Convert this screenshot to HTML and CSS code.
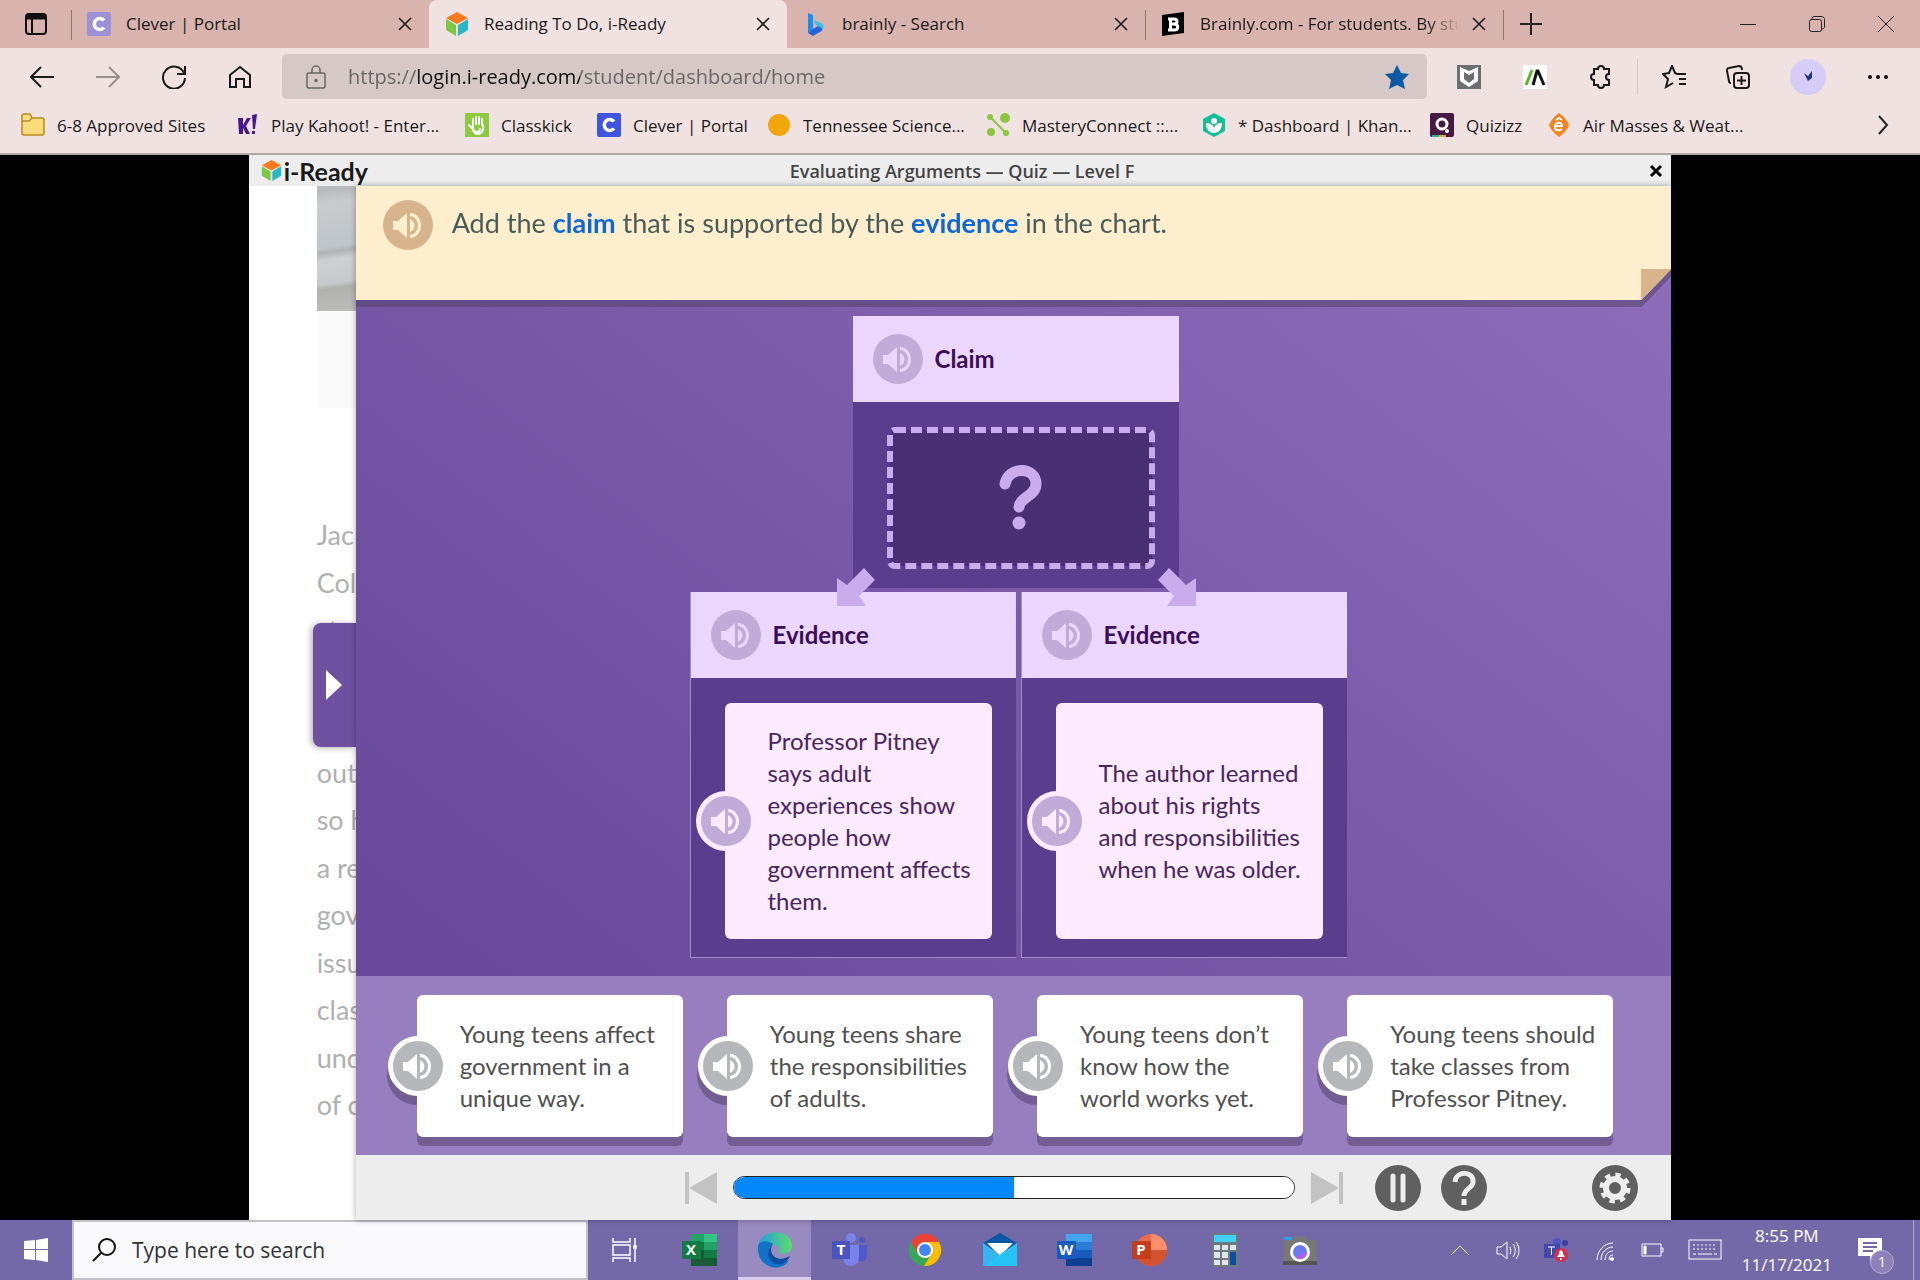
FILE: index.html
```html
<!DOCTYPE html>
<html lang="en">
<head>
    <meta charset="UTF-8">
    <meta name="viewport" content="width=device-width, initial-scale=1.0">
    <title>Reading To Do, i-Ready</title>
    <link rel="stylesheet" href="styles.css">
</head>
<body>
    <!-- Shared icons -->
    <svg class="sprite" aria-hidden="true">
        <symbol id="speaker" viewBox="0 0 50 50">
            <path fill="currentColor" d="M10 21h5l9-8v25l-9-8h-5zM27 19c6 3 6 10 0 13z"/>
            <path fill="none" stroke="currentColor" stroke-width="3" d="M27 14.500a9.500 11 0 0 1 0 22"/>
        </symbol>
        <symbol id="close" viewBox="0 0 16 16">
            <path fill="none" stroke="currentColor" stroke-width="1.600" d="M2 2l12 12M14 2L2 14"/>
        </symbol>
        <symbol id="cube" viewBox="0 0 24 24">
            <path fill="#f47b20" d="M12 0l11 6-11 6L1 6z"/>
            <path fill="#7ac943" d="M1 7l10 6v11L1 18z"/>
            <path fill="#27b5c8" d="M23 7l-10 6v11l10-6z"/>
        </symbol>
        <symbol id="clever" viewBox="0 0 24 24">
            <rect width="24" height="24" rx="2" fill="currentColor"/>
            <path fill="none" stroke="#fff" stroke-width="3.500" d="M17 8.500a5.500 5.500 0 1 0 0 7"/>
        </symbol>
    </svg>

    <div class="tabs">
        <button class="tab-actions" aria-label="Tab actions menu">
            <svg width="24" height="24" viewBox="0 0 24 24" fill="none" stroke="#111" stroke-width="2"><rect x="2" y="2" width="20" height="20" rx="3"/><path d="M2 5h20" stroke-width="5"/><path d="M8 7v15"/></svg>
        </button>
        <div class="tab">
            <svg class="icon tab-clever"><use href="#clever"/></svg>
            <span>Clever | Portal</span>
            <button aria-label="Close tab"><svg><use href="#close"/></svg></button>
        </div>
        <div class="tab active">
            <svg class="icon"><use href="#cube"/></svg>
            <span>Reading To Do, i-Ready</span>
            <button aria-label="Close tab"><svg><use href="#close"/></svg></button>
        </div>
        <div class="tab no-line">
            <svg class="icon" viewBox="0 0 24 24"><path fill="#1b8df0" d="M5 1l5 2v14l-5 4z"/><path fill="#2563dd" d="M5 21l5-4 5-3 5 1c0 3-2 5-5 6l-5 3z"/><path fill="#35c3f3" d="M11 8l7 3c2 1 3 3 2 6l-7-4z"/></svg>
            <span>brainly - Search</span>
            <button aria-label="Close tab"><svg><use href="#close"/></svg></button>
        </div>
        <div class="tab">
            <svg class="icon" viewBox="0 0 24 24"><path d="M1 3l22-3v21L1 24z"/><path fill="none" stroke="#fff" stroke-width="3" d="M7 7h6c4 0 4 5 0 5h-3 3c5 0 5 6 0 6H7M9.500 7v11"/></svg>
            <span class="fade">Brainly.com - For students. By stu</span>
            <button aria-label="Close tab"><svg><use href="#close"/></svg></button>
        </div>
        <div class="new-tab">
            <button aria-label="New tab"><svg width="22" height="22" viewBox="0 0 22 22" stroke="#222" stroke-width="2"><path d="M11 0v22M0 11h22"/></svg></button>
        </div>
        <div class="window-buttons">
            <button aria-label="Minimize"><svg width="16" height="16" viewBox="0 0 16 16" stroke="#222"><path d="M0 8.500h16"/></svg></button>
            <button aria-label="Restore"><svg width="16" height="16" viewBox="0 0 16 16" fill="none" stroke="#222"><rect x=".5" y="3.500" width="12" height="12" rx="2"/><path d="M3 3c0-2 1-2.500 2-2.500h7c2 0 3.500 1 3.500 3V11c0 1-1 2-3 2"/></svg></button>
            <button aria-label="Close window"><svg width="16" height="16" viewBox="0 0 16 16" stroke="#222"><path d="M0 0l16 16M16 0L0 16"/></svg></button>
        </div>
    </div>

    <div class="toolbar">
        <div class="nav-buttons">
            <button aria-label="Back"><svg viewBox="0 0 24 24"><path d="M11 2L1 12l10 10M1 12h23"/></svg></button>
            <button class="dim" aria-label="Forward"><svg viewBox="0 0 24 24"><path d="M13 2l10 10-10 10M23 12H0"/></svg></button>
            <button aria-label="Refresh"><svg viewBox="0 0 24 24"><path d="M22 8a11 11 0 1 0 1 5M23 1v8h-8"/></svg></button>
            <button aria-label="Home"><svg viewBox="0 0 24 24"><path d="M2 10l10-8 10 8v12h-6v-8H8v8H2z"/></svg></button>
        </div>
        <div class="address">
            <svg class="lock" width="20" height="24" viewBox="0 0 20 24" fill="none" stroke="#666" stroke-width="1.600"><rect x="1" y="8" width="18" height="15" rx="2"/><path d="M6 8V5a4 4 0 0 1 8 0v3"/><circle cx="10" cy="15.500" r="1" fill="#666"/></svg>
            <input type="text" aria-label="Address" value="https://login.i-ready.com/student/dashboard/home">
            <button aria-label="Favorite"><svg viewBox="0 0 24 24"><path fill="#0c59a4" d="M12 0l4 8 8 1-6 6 2 9-8-4-8 4 2-9-6-6 8-1z"/></svg></button>
        </div>
        <div class="extensions">
            <button aria-label="McAfee"><svg viewBox="0 0 24 24"><rect width="24" height="24" fill="#6b6f70"/><path fill="#fff" d="M3 2l9 4 9-4v14l-9 6-9-6z"/><path fill="#6b6f70" d="M7 7l5 3 5-3v7l-5 4-5-4z"/></svg></button>
            <button aria-label="Accelerate"><svg viewBox="0 0 24 24"><rect width="24" height="24" fill="#fff"/><path stroke="#5cb531" stroke-width="3" d="M3 20L9 5"/><path fill="none" stroke="#111" stroke-width="3.500" d="M10 20l4-14h1l6 14"/></svg></button>
            <button aria-label="Extensions"><svg viewBox="0 0 24 24"><path d="M5 4h4c0-4 6-4 6 0h5v5c-4 0-4 6 0 6v5h-5c0 4-6 4-6 0H5v-5c-4 0-4-6 0-6z"/></svg></button>
        </div>
        <div class="browser-tools">
            <button aria-label="Favorites"><svg viewBox="0 0 24 24"><path d="M15 9h9M17 14h7M17 19h7M15 9l-2-1-3-7-3 7-6 1 5 5-2 8 7-4"/></svg></button>
            <button aria-label="Collections"><svg viewBox="0 0 24 24"><rect x="8" y="8" width="15" height="15" rx="3"/><path d="M15.500 11v9M11 15.500h9M5 18c-1 0-2-1-2-2L1 6c0-2 0-3 2-3l10-2c2 0 3 1 3 4"/></svg></button>
            <button class="avatar" aria-label="Profile"><svg viewBox="0 0 24 24"><path fill="#27357a" stroke="none" d="M12 16L8 8l4 3 4-5v7z"/></svg></button>
            <button aria-label="Settings and more"><svg viewBox="0 0 24 24"><g fill="#111" stroke="none"><circle cx="4" cy="12" r="2"/><circle cx="12" cy="12" r="2"/><circle cx="20" cy="12" r="2"/></g></svg></button>
        </div>
    </div>

    <nav class="bookmarks">
        <a href="#"><svg class="icon" viewBox="0 0 24 24"><path fill="#fbdc7c" stroke="#b98a1d" stroke-width="1.500" d="M1 3c0-1 1-2 2-2h6l2 4h10c1 0 2 1 2 2v13c0 1-1 2-2 2H3c-1 0-2-1-2-2zM1 8h7l3-3"/></svg>6-8 Approved Sites</a>
        <a href="#"><svg class="icon" viewBox="0 0 24 24"><path fill="#46178f" d="M3 5h5v7l4-7h4l-5 8 4 8h-4l-3-6v6H4zM17 2l5-1-2 15h-2zM17 18h3v3h-3z"/></svg>Play Kahoot! - Enter...</a>
        <a href="#"><svg class="icon" viewBox="0 0 24 24"><rect width="24" height="24" fill="#8ccb3f"/><path fill="none" stroke="#fff" stroke-width="2" stroke-linecap="round" d="M8 12V6M11 11V4M14 11V4M17 12V6M4 12l4 4M8 12c-1 4 0 8 4 9 5 0 7-4 6-9M9 17c2 3 5 3 6-1"/></svg>Classkick</a>
        <a href="#"><svg class="icon blue"><use href="#clever"/></svg>Clever | Portal</a>
        <a href="#"><svg class="icon" viewBox="0 0 24 24"><circle cx="12" cy="12" r="11" fill="#f3a60c"/></svg>Tennessee Science...</a>
        <a href="#"><svg class="icon" viewBox="0 0 24 24"><g fill="#8cc63f"><circle cx="4" cy="4" r="3"/><circle cx="19" cy="5" r="5"/><circle cx="5" cy="19" r="4"/><circle cx="20" cy="20" r="3"/></g><path stroke="#8cc63f" stroke-width="2" d="M4 4l16 16"/></svg>MasteryConnect ::...</a>
        <a href="#"><svg class="icon" viewBox="0 0 24 24"><path fill="#14bf96" d="M12 0l11 6v12l-11 6-11-6V6z"/><circle cx="12" cy="8" r="3" fill="#fff"/><path fill="#fff" d="M4 10c4 0 7 2 8 5 1-3 4-5 8-5 0 6-3 10-8 10s-8-4-8-10z"/></svg>* Dashboard | Khan...</a>
        <a href="#"><svg class="icon" viewBox="0 0 24 24"><rect width="24" height="24" rx="2" fill="#461a42"/><path fill="#22b4ad" d="M2 22h7v2H2z"/><path fill="#e7a83b" d="M9 22h7v2H9z"/><circle cx="12" cy="11" r="5" fill="none" stroke="#fff" stroke-width="3"/><circle cx="17" cy="18" r="2" fill="#fff"/></svg>Quizizz</a>
        <a href="#"><svg class="icon" viewBox="0 0 24 24"><path fill="#f58220" d="M12 0c3 2 9 8 10 12-1 4-7 10-10 12-3-2-9-8-10-12C3 8 9 2 12 0z"/><path fill="none" stroke="#fff" stroke-width="2" d="M9 13h6c0-5-7-4-7 1 0 4 5 4 7 2M9 7l3-2 3 2"/></svg>Air Masses &amp; Weat...</a>
        <button aria-label="More favorites"><svg width="12" height="20" viewBox="0 0 12 20" fill="none" stroke="#222" stroke-width="2"><path d="M2 1l8 9-8 9"/></svg></button>
    </nav>

    <div class="screen">
        <div class="app">
            <header class="app-header">
                <div class="logo"><svg><use href="#cube"/></svg>i-Ready</div>
                <h1>Evaluating Arguments — Quiz — Level F</h1>
                <button aria-label="Close lesson"><svg width="14" height="14" stroke="#000" stroke-width="3"><path d="M2 2l10 10M12 2L2 12"/></svg></button>
            </header>
            <div class="app-body">
                <aside class="passage">
                    <div class="passage-image"></div>
                    <div class="passage-caption"></div>
                    <div class="passage-text">
                        <p>Jac</p>
                        <p>Col</p>
                        <p>st</p>
                        <p>&nbsp;</p>
                        <p>&nbsp;</p>
                        <p>out</p>
                        <p>so h</p>
                        <p>a re</p>
                        <p>gov</p>
                        <p>issu</p>
                        <p>clas</p>
                        <p>und</p>
                        <p>of c</p>
                    </div>
                    <button class="passage-toggle" aria-label="Show passage"><svg width="16" height="30"><path fill="#fff" d="M0 0l16 15L0 30z"/></svg></button>
                </aside>

                <main class="question">
                    <div class="prompt">
                        <div class="prompt-paper">
                            <button class="audio tan" aria-label="Play audio"><svg><use href="#speaker"/></svg></button>
                            <p>Add the <b>claim</b> that is supported by the <b>evidence</b> in the chart.</p>
                        </div>
                    </div>

                    <div class="chart">
                        <section class="box claim">
                            <div class="box-title">
                                <button class="audio" aria-label="Play audio"><svg><use href="#speaker"/></svg></button>
                                <h2>Claim</h2>
                            </div>
                            <div class="drop">
                                <svg width="268" height="142">
                                    <rect x="3" y="3" width="262" height="136" rx="5" fill="#493073" stroke="#c9aceb" stroke-width="6" stroke-dasharray="11 5"/>
                                    <path fill="none" stroke="#c9aceb" stroke-width="11" stroke-linecap="round" d="M118 57c3-18 31-18 31 0 0 12-16 13-17 23"/>
                                    <circle cx="132" cy="96" r="6.500" fill="#c9aceb"/>
                                </svg>
                            </div>
                            <svg class="arrow left" width="38" height="38"><path d="M27 0l11 12-16 16 7 10H0V10l10 7z"/></svg>
                            <svg class="arrow right" width="38" height="38"><path d="M11 0L0 12l16 16-7 10h29V10l-10 7z"/></svg>
                        </section>
                        <div class="evidence-row">
                            <section class="box">
                                <div class="box-title">
                                    <button class="audio" aria-label="Play audio"><svg><use href="#speaker"/></svg></button>
                                    <h2>Evidence</h2>
                                </div>
                                <div class="card pink">
                                    <button class="audio" aria-label="Play audio"><svg><use href="#speaker"/></svg></button>
                                    <p>Professor Pitney<br>says adult<br>experiences show<br>people how<br>government affects<br>them.</p>
                                </div>
                            </section>
                            <section class="box">
                                <div class="box-title">
                                    <button class="audio" aria-label="Play audio"><svg><use href="#speaker"/></svg></button>
                                    <h2>Evidence</h2>
                                </div>
                                <div class="card pink">
                                    <button class="audio" aria-label="Play audio"><svg><use href="#speaker"/></svg></button>
                                    <p>The author learned<br>about his rights<br>and responsibilities<br>when he was older.</p>
                                </div>
                            </section>
                        </div>
                    </div>

                    <div class="choices">
                        <div class="card">
                            <button class="audio" aria-label="Play audio"><svg><use href="#speaker"/></svg></button>
                            <p>Young teens affect<br>government in a<br>unique way.</p>
                        </div>
                        <div class="card">
                            <button class="audio" aria-label="Play audio"><svg><use href="#speaker"/></svg></button>
                            <p>Young teens share<br>the responsibilities<br>of adults.</p>
                        </div>
                        <div class="card">
                            <button class="audio" aria-label="Play audio"><svg><use href="#speaker"/></svg></button>
                            <p>Young teens don’t<br>know how the<br>world works yet.</p>
                        </div>
                        <div class="card">
                            <button class="audio" aria-label="Play audio"><svg><use href="#speaker"/></svg></button>
                            <p>Young teens should<br>take classes from<br>Professor Pitney.</p>
                        </div>
                    </div>

                    <footer class="controls">
                        <div class="player">
                            <button aria-label="Previous"><svg width="32" height="32" fill="#c3c3c3"><path d="M0 0h4v32H0zM32 0v32L4 16z"/></svg></button>
                            <progress value="50" max="100" aria-label="Lesson progress"></progress>
                            <button aria-label="Next"><svg width="32" height="32" fill="#c3c3c3"><path d="M28 0h4v32h-4zM0 0v32l28-16z"/></svg></button>
                        </div>
                        <div class="round-buttons">
                            <button aria-label="Pause"><svg width="46" height="46" stroke="#ededed" stroke-width="5" stroke-linecap="round"><path d="M18 11v24M28 11v24"/></svg></button>
                            <button aria-label="Help"><svg width="46" height="46" fill="none" stroke="#ededed" stroke-width="5"><path d="M14 17c1-12 19-11 18 0 0 6-9 7-9 14M23 34v6"/></svg></button>
                        </div>
                        <button class="settings" aria-label="Settings"><svg width="46" height="46" fill="none" stroke="#ededed"><circle cx="23" cy="23" r="9" stroke-width="6"/><circle cx="23" cy="23" r="13" stroke-width="5" stroke-dasharray="5.200 5"/></svg></button>
                    </footer>
                </main>
            </div>
        </div>
    </div>

    <div class="taskbar">
        <button class="start" aria-label="Start"><svg width="24" height="24" viewBox="0 0 24 24" fill="#fff"><path d="M0 3l11-1v9H0zM12 2l12-2v11H12zM0 12h11v10L0 21zM12 12h12v12l-12-2z"/></svg></button>
        <div class="search">
            <svg width="24" height="24" viewBox="0 0 24 24" fill="none" stroke="#111" stroke-width="2"><circle cx="15" cy="9" r="8"/><path d="M9 15l-8 8"/></svg>
            <input type="text" placeholder="Type here to search" aria-label="Type here to search">
        </div>
        <div class="apps">
            <button aria-label="Task View"><svg viewBox="0 0 36 36" fill="none" stroke="#fff" stroke-width="1.500"><path d="M6 6v4h17V6M6 30v-4h17v4M6 13h17v10H6zM28 6v24"/><path fill="#fff" d="M27 14h2v2h-2z"/></svg></button>
            <button aria-label="Excel"><svg viewBox="0 0 36 36"><path fill="#21a366" d="M9 2h26v32H9z"/><path fill="#33c481" d="M22 2h13v8H22z"/><path fill="#107c41" d="M9 10h13v8H9zM22 18h13v8H22z"/><path fill="#185c37" d="M9 18h13v8h13v8H9z"/><rect y="9" width="19" height="18" rx="1" fill="#107c41"/><text x="9" y="23" class="app-letter">X</text></svg></button>
            <button class="current" aria-label="Edge"><svg viewBox="0 0 36 36">
                <defs><linearGradient id="edge"><stop offset="0" stop-color="#1f9de0"/><stop offset="1" stop-color="#5fdc6a"/></linearGradient></defs>
                <path fill="url(#edge)" d="M1 15C3-5 35-4 35 14c0 7-8 9-14 7 3-4 1-8-4-8-6 0-12 4-14 10-2-3-2-5-2-8z"/><path fill="#1173c7" d="M1 16c0-7 8-9 15-4-6 3-6 13 1 17 5 3 10 2 15-1-4 8-14 9-20 6C4 31 1 24 1 16z"/><path fill="#0f4f9f" d="M16 12c-5 7 0 14 7 15 3 0 6-1 10-3-5 12-20 11-22-2 0-4 2-8 5-10z"/></svg></button>
            <button aria-label="Teams"><svg viewBox="0 0 36 36"><circle cx="19" cy="6" r="5" fill="#7b83eb"/><circle cx="30" cy="8" r="3" fill="#5059c9"/><path fill="#5059c9" d="M24 13h11v10c0 6-5 8-10 5z"/><path fill="#7b83eb" d="M11 13h16v12c0 12-16 12-16 0z"/><rect y="9" width="18" height="18" rx="1" fill="#4b53bc"/><text x="9" y="23" class="app-letter">T</text></svg></button>
            <button aria-label="Chrome"><svg viewBox="0 0 36 36"><circle cx="18" cy="18" r="16" fill="#34a853"/><path fill="#ea4335" d="M4 10a16 16 0 0 1 28 0H18l-7 12z"/><path fill="#fbbc04" d="M32 10a16 16 0 0 1-15 24l8-13-7-11z"/><circle cx="18" cy="18" r="8" fill="#fff"/><circle cx="18" cy="18" r="6" fill="#4285f4"/></svg></button>
            <button aria-label="Mail"><svg viewBox="0 0 36 36"><path fill="#0a57a5" d="M18 1L1 11l17 12 17-12z"/><path fill="#fff" d="M5 11h26L18 24z"/><path fill="#38b5f1" d="M1 11l17 12L1 34z"/><path fill="#27c3f4" d="M35 11L1 34h34z"/></svg></button>
            <button aria-label="Word"><svg viewBox="0 0 36 36"><path fill="#41a5ee" d="M9 2h26v8H9z"/><path fill="#2b7cd3" d="M9 10h26v8H9z"/><path fill="#185abd" d="M9 18h26v8H9z"/><path fill="#103f91" d="M9 26h26v8H9z"/><rect y="9" width="19" height="18" rx="1" fill="#185abd"/><text x="9" y="23" class="app-letter">W</text></svg></button>
            <button aria-label="PowerPoint"><svg viewBox="0 0 36 36"><circle cx="19" cy="18" r="16" fill="#ed6c47"/><path fill="#ff8f6b" d="M19 2a16 16 0 0 1 16 16H19z"/><path fill="#d35230" d="M3 18h32a16 16 0 0 1-32 0z"/><rect y="9" width="19" height="18" rx="1" fill="#c43e1c"/><text x="9" y="23" class="app-letter">P</text></svg></button>
            <button aria-label="Calculator"><svg viewBox="0 0 36 36"><rect x="5" y="1" width="26" height="34" fill="#6d7a80"/><path fill="#3fd0f7" d="M7 3h22v7H7z"/><path fill="#dfe5e8" d="M7 13h6v5H7zM15 13h6v5h-6zM23 13h6v5h-6zM7 20h6v6H7zM15 20h6v6h-6zM7 28h6v5H7zM15 28h6v5h-6z"/><path fill="#0f4e9b" d="M23 20h6v13h-6z"/></svg></button>
            <button aria-label="Camera"><svg viewBox="0 0 36 36"><path fill="#777" d="M1 8h9l3-4h10l3 4h9v25H1z"/><path fill="#555" d="M1 29h34v4H1z"/><path fill="#27a5e8" d="M2 5h8v3H2z"/><circle cx="18" cy="20" r="10" fill="#fff"/><circle cx="18" cy="20" r="7" fill="#6a7bf0"/><path fill="#b25de8" d="M13 25a7 7 0 0 0 12-5z"/></svg></button>
        </div>
        <div class="tray">
            <button aria-label="Show hidden icons"><svg viewBox="0 0 24 24"><path d="M3 17l9-9 9 9"/></svg></button>
            <button aria-label="Volume"><svg viewBox="0 0 24 24"><path d="M1 9h4l6-5v17l-6-5H1zM14 9c1 2 1 5 0 7M17 6c3 4 3 9 0 13M20 4c4 5 4 12 0 17"/></svg></button>
            <button aria-label="Teams notifications"><svg viewBox="0 0 24 24"><g stroke="none"><circle cx="13" cy="4" r="4" fill="#4c55c5"/><circle cx="21" cy="5" r="3" fill="#39409f"/><path fill="#4149ac" d="M0 6h16v14H0z"/><circle cx="17" cy="17" r="7" fill="#d2304a"/><path fill="#fff" d="M13 19l2-3c0-5 4-5 4 0l2 3zM16 20h2v2h-2z"/></g><path d="M4 9h7M7.500 9v8"/></svg></button>
            <button aria-label="Network"><svg viewBox="0 0 24 24"><path d="M5 22C5 13 12 5 21 5M9 22c0-7 5-13 12-13M13 22c0-5 3-9 8-9M17 22c0-3 1-5 4-5"/><circle cx="20" cy="21" r="1.500" fill="#fff"/></svg></button>
            <button aria-label="Battery"><svg viewBox="0 0 24 24"><path d="M2 6h19v12H2zM21 10h2v4h-2"/><path fill="#fff" d="M4 8h2v8H4z"/></svg></button>
            <button class="keyboard" aria-label="Touch keyboard"><svg viewBox="0 0 34 24"><rect x="1" y="2" width="32" height="19"/><path stroke-dasharray="2 2" d="M5 7h24M5 11h24"/><path d="M5 16h3M10 16h14M26 16h3"/></svg></button>
            <time datetime="2021-11-17T20:55">8:55 PM<br>11/17/2021</time>
            <button class="notices" aria-label="1 new notification"><svg viewBox="0 0 24 24"><path fill="#fff" stroke="none" d="M0 0h24v18h-7l-5 6v-6H0z"/><path stroke="#7369a8" stroke-width="2" d="M5 5h14M5 9h14M5 13h10"/></svg><span>1</span></button>
        </div>
    </div>
</body>
</html>
```
FILE: styles.css
```css
* { box-sizing: border-box; }
body { margin: 0; height: 100vh; display: flex; flex-direction: column; overflow: hidden; font-family: "Open Sans", "Noto Sans", sans-serif; font-size: 17px; color: #1a1a1a; background: #000; }
button { display: flex; align-items: center; justify-content: center; padding: 0; border: none; background: none; font: inherit; color: inherit; cursor: pointer; }
input { border: none; outline: none; background: none; font: inherit; }
h1, h2, p { margin: 0; }
.sprite { position: absolute; width: 0; height: 0; }
.icon { width: 24px; height: 24px; flex: none; }

/* Browser tabs */
.tabs { display: flex; height: 48px; background: #d9b3ad; }
.tab-actions { width: 71px; }
.tab { display: flex; align-items: center; flex: 0 1 358px; min-width: 0; padding: 0 16px; position: relative; }
.tab::before, .new-tab::before { content: ""; width: 1px; height: 30px; background: #8f736f; position: absolute; left: 0; top: 10px; }
.tab.active::before, .tab.no-line::before { display: none; }
.tab.active { background: #f0e2e0; border-radius: 8px 8px 0 0; }
.tab span { flex: 1; margin: 0 12px 0 15px; padding-bottom: 2px; white-space: nowrap; overflow: hidden; }
.tab .fade { mask-image: linear-gradient(to right, #000 88%, transparent); }
.tab button svg { width: 16px; height: 16px; }
.tab-clever { color: #9c90d6; }
.new-tab { display: flex; padding: 0 17px; position: relative; }
.window-buttons { display: flex; margin-left: auto; }
.window-buttons button { width: 69px; }

/* Toolbar */
.toolbar { display: flex; align-items: center; height: 57px; background: #f0e2e0; }
.toolbar svg { width: 24px; height: 24px; fill: none; stroke: #1a1a1a; stroke-width: 2; }
.nav-buttons { display: flex; gap: 42px; padding: 0 30px; }
.nav-buttons .dim { opacity: .4; }
.address { display: flex; align-items: center; flex: 1; height: 45px; padding: 0 18px 0 24px; border-radius: 5px; background: #d5c8c6; }
.address .lock { width: 20px; stroke: #666; stroke-width: 1.5; }
.address input { flex: 1; margin-left: 20px; font-size: 20px; color: transparent; background: linear-gradient(to right, #666 70px, #111 70px, #111 234px, #666 234px); background-clip: text; -webkit-background-clip: text; }
.address button svg, .extensions button:not(:last-child) svg { stroke: none; }
.extensions, .browser-tools { display: flex; align-items: center; gap: 42px; padding: 0 30px; }
.extensions path[stroke="#5cb531"] { stroke: #5cb531; stroke-width: 3; }
.extensions path[stroke="#111"] { stroke: #111; stroke-width: 3; }
.extensions { padding-right: 24px; }
.browser-tools { gap: 40px; padding-left: 24px; border-left: 1px solid #d8cac8; }
.avatar { width: 36px; height: 36px; border-radius: 50%; background: #d5cdf8; }

/* Bookmarks */
.bookmarks { display: grid; grid-template-columns: 214px 230px 132px 170px 219px 216px 228px 117px 1fr 42px; align-items: center; height: 50px; padding-left: 21px; padding-bottom: 8px; padding-right: 16px; background: #f0e2e0; border-bottom: 2px solid #b3a8a8; }
.bookmarks a { display: flex; align-items: center; gap: 12px; color: #1a1a1a; text-decoration: none; white-space: nowrap; }
.bookmarks .blue { color: #3e53e0; }

/* i-Ready window */
.screen { flex: 1; min-height: 0; display: flex; justify-content: center; background: #000; }
.app { width: 74.1%; display: flex; flex-direction: column; background: #fff; }
.app-header { display: grid; grid-template-columns: 1fr auto 1fr; align-items: center; height: 31px; padding: 0 8px 0 12px; background: #ededed; }
.app-header h1 { font-size: 18px; font-weight: 600; line-height: 30px; color: #444; }
.app-header button { justify-self: end; }
.logo { display: flex; align-items: center; gap: 2px; font-family: Lato, sans-serif; font-size: 25px; font-weight: 700; line-height: 30px; }
.logo svg { width: 21px; height: 23px; }
.app-body { flex: 1; min-height: 0; display: flex; font-family: Lato, sans-serif; }

/* Passage behind the question */
.passage { width: 107px; padding-left: 68px; position: relative; }
.passage-image { height: 125px; background: linear-gradient(172deg, #b9bbbd 5%, #c9ccce 14%, #c0c5c9 48%, #b1b4b5 52%, #cdcfd0 58%, #c8c9ca 76%, #b1b1b0 80%, #bcbcbb); }
.passage-caption { height: 97px; background: #fafafa; }
.passage-text { display: flex; flex-direction: column; justify-content: space-between; height: 610px; margin-top: 107px; overflow: hidden; font-size: 27px; line-height: 40px; color: #b0b0b0; white-space: nowrap; }
.passage-toggle { position: absolute; right: 0; top: 437px; width: 43px; height: 124px; border-radius: 8px 0 0 8px; background: #6d509f; box-shadow: -2px 1px 6px rgba(0, 0, 0, 0.3); }

/* Question */
.question { flex: 1; min-width: 0; display: flex; flex-direction: column; position: relative; background: linear-gradient(to top right, #68499a 15%, #8b6dba 95%); box-shadow: 0 0 6px rgba(0, 0, 0, 0.35); }
.prompt { height: 121px; filter: drop-shadow(0 7px 0 rgba(77, 64, 97, 0.5)); }
.prompt-paper { display: flex; align-items: flex-start; gap: 19px; height: 114px; padding: 14px 27px; background: linear-gradient(#d8b48c, #d8b48c) right bottom / 30px 31px no-repeat, #fdefcd; clip-path: polygon(0 0, 100% 0, 100% 83px, calc(100% - 30px) 100%, 0 100%); }
.prompt p { font-size: 27px; line-height: 46px; color: #4b5b57; }
.prompt b { color: #0f66d6; }
.audio { flex: none; width: 50px; height: 50px; border-radius: 50%; color: #ebd6fe; background: #c1abd9; }
.audio svg { width: 50px; height: 50px; }
.audio.tan { color: #fdefcd; background: #d8b48c; }

/* Argument chart */
.chart { flex: 1; display: flex; flex-direction: column; align-items: center; gap: 4px; padding: 9px 0 18px 9px; }
.box { display: flex; flex-direction: column; width: 326px; background: #5a3e8d; position: relative; }
.box-title { display: flex; align-items: center; gap: 12px; height: 86px; padding: 0 20px; background: #ebd6fe; }
.box-title h2 { font-size: 24px; line-height: 32px; color: #3a0e57; }
.claim { height: 272px; margin-right: 5px; }
.drop { display: flex; padding: 25px 24px 0 34px; }
.arrow { position: absolute; bottom: -18px; z-index: 1; fill: #c9aceb; }
.arrow.left { left: -16px; }
.arrow.right { right: -17px; }
.evidence-row { flex: 1; display: flex; gap: 5px; }
.evidence-row .box { border: 1px solid #a58bcd; border-width: 0 0 1px 1px; }
.evidence-row .card { flex: 1; margin: 25px 24px 18px 34px; }

/* Cards */
.card { display: flex; align-items: center; border-radius: 6px; background: #fff; color: #505050; position: relative; }
.card p { padding-left: 43px; font-size: 24px; line-height: 32px; white-space: nowrap; }
.card .audio { position: absolute; left: -29px; width: 60px; height: 60px; border: 5px solid #fff; color: #fff; background: #b5b7ba; }
.card.pink { background: #feeafe; color: #47265c; }
.card.pink .audio { border-color: #feeafe; color: #feeafe; background: #c1abd9; }
.choices { display: grid; grid-template-columns: repeat(4, 1fr); gap: 44px; height: 179px; padding: 19px 58px 18px 61px; isolation: isolate; background: #977ebf; }
.choices .card { box-shadow: 0 9px 0 #725e92; }
.choices .card::before { content: ""; width: 60px; height: 60px; border-radius: 50%; background: #725e92; position: absolute; left: -30px; top: 50px; z-index: -1; }

/* Player controls */
.controls { display: flex; align-items: center; height: 65px; padding: 0 33px 0 329px; background: #ededed; }
.player { display: flex; align-items: center; gap: 16px; }
.player progress { width: 562px; height: 23px; border: 1px solid #222; border-radius: 12px; overflow: hidden; appearance: none; background: #fff; }
.player progress::-webkit-progress-bar { background: #fff; }
.player progress::-webkit-progress-value { background: #0488fb; }
.round-buttons { display: flex; gap: 20px; margin-left: 32px; }
.round-buttons button, .settings { width: 46px; height: 46px; border-radius: 50%; background: #5f605f; }
.settings { margin-left: auto; }

/* Taskbar */
.taskbar { display: flex; height: 60px; background: #7369a8; color: #fff; }
.start { width: 72px; }
.search { display: flex; align-items: center; gap: 14px; width: 516px; padding: 0 18px; background: #f9f9fb; border: 2px solid #c4c2c8; }
.search input { flex: 1; font-size: 21px; }
.search input::placeholder { color: #333; }
.apps { display: flex; gap: 2px; }
.apps button { width: 73px; }
.apps svg { width: 36px; height: 36px; }
.apps .current { background: #988bc0; box-shadow: inset 0 -3px 0 #d9cdee; }
.app-letter { font-size: 15px; font-weight: 700; fill: #fff; text-anchor: middle; }
.tray { display: flex; align-items: center; gap: 24px; margin-left: auto; margin-right: 6px; padding-right: 31px; border-right: 1px solid #aaa3cb; }
.tray svg { width: 24px; height: 24px; fill: none; stroke: #fff; }
.tray .keyboard svg { width: 34px; }
.tray time { margin: 0 2px 0 -4px; font-size: 17px; line-height: 29px; text-align: center; }
.notices { position: relative; }
.notices span { position: absolute; left: 12px; top: 12px; width: 24px; height: 24px; border: 1px solid #b3a8d8; border-radius: 50%; background: #8e80b8; font-size: 14px; line-height: 22px; }
```
